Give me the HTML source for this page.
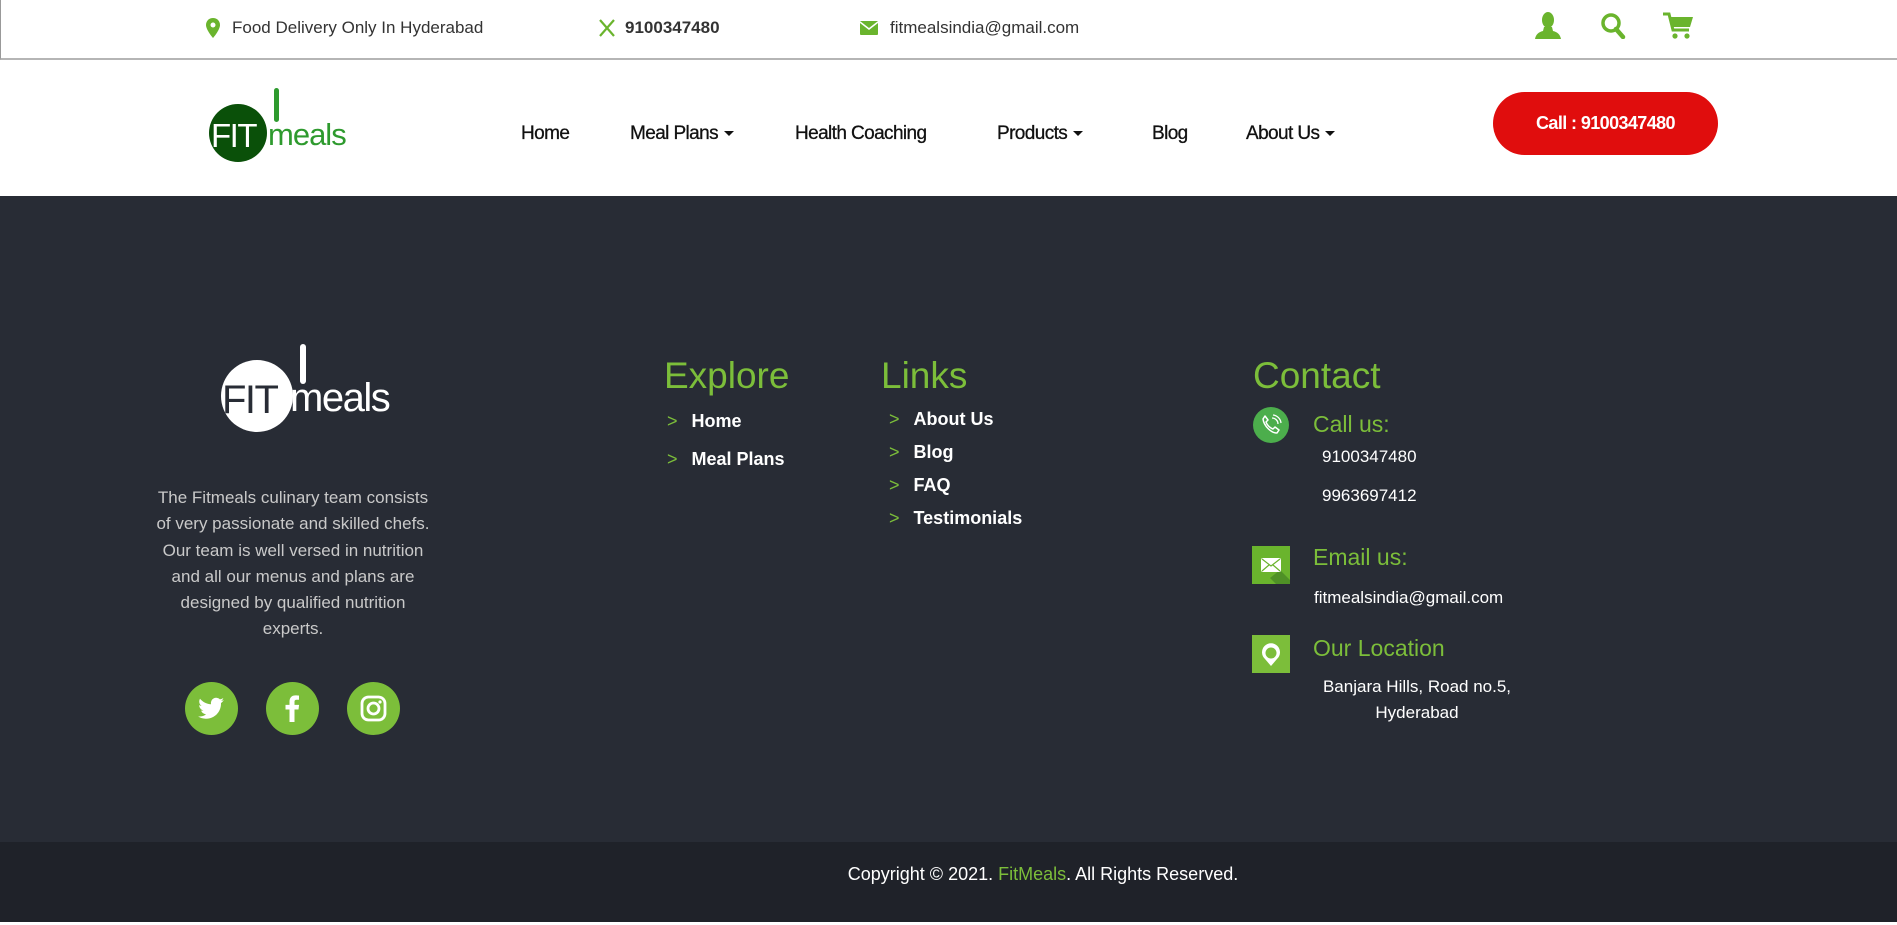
<!DOCTYPE html>
<html><head><meta charset="utf-8"><style>
*{margin:0;padding:0;box-sizing:border-box}
body{width:1897px;height:925px;position:relative;overflow:hidden;background:#fff;font-family:"Liberation Sans",Arial,sans-serif}
.a{position:absolute;white-space:nowrap}
.top{left:0;top:0;width:1897px;height:60px;border-bottom:2px solid #b5b5b5;border-left:1px solid #999}
.tt{font-size:17px;color:#333;top:18px}
.nav{font-size:19px;color:#111;top:123px;letter-spacing:-0.6px;-webkit-text-stroke:0.3px #111}
.car{display:inline-block;width:0;height:0;border-left:5px solid transparent;border-right:5px solid transparent;border-top:5px solid #111;vertical-align:middle;margin-left:6px}
.foot{left:0;top:196px;width:1897px;height:646px;background:#282c35}
.bot{left:0;top:842px;width:1897px;height:80px;background:#1f2229}
.g{color:#7cbe3a}
.h{font-size:37px;color:#7cbe3a}
.li{font-size:18px;color:#fff;font-weight:bold}
.li b{color:#7cbe3a;font-weight:normal;margin-right:14px}
.sub{font-size:23px;color:#7cbe3a}
.w{font-size:17px;color:#fff}
.soc{width:53px;height:53px;border-radius:50%;background:#7cbe3a;top:682px}
</style></head><body>
<div class="a top"></div>
<svg class="a" style="left:206px;top:18px" width="14" height="20" viewBox="0 0 14 20"><path d="M7 0C3 0 0 3 0 7c0 5 7 13 7 13s7-8 7-13c0-4-3-7-7-7z" fill="#6ab42d"/><circle cx="7" cy="7" r="2.5" fill="#fff"/></svg>
<div class="a tt" style="left:232px">Food Delivery Only In Hyderabad</div>
<svg class="a" style="left:599px;top:19px" width="16" height="18" viewBox="0 0 16 18"><path d="M1 1L15 17M15 1L1 17" stroke="#6ab42d" stroke-width="2.2"/></svg>
<div class="a tt" style="left:625px;font-weight:bold">9100347480</div>
<svg class="a" style="left:860px;top:21px" width="18" height="14" viewBox="0 0 18 14"><rect width="18" height="14" rx="1" fill="#6ab42d"/><path d="M0 1L9 8L18 1" stroke="#fff" stroke-width="1.5" fill="none"/></svg>
<div class="a tt" style="left:890px">fitmealsindia@gmail.com</div>
<svg class="a" style="left:1535px;top:12px" width="26" height="27" viewBox="0 0 26 27"><ellipse cx="13" cy="8" rx="6" ry="8" fill="#6ab42d"/><path d="M9 15h8l1 4c4 1 7 3 8 8H0c1-5 4-7 8-8z" fill="#6ab42d"/></svg>
<svg class="a" style="left:1600px;top:12px" width="26" height="27" viewBox="0 0 26 27"><circle cx="11" cy="11" r="8" stroke="#6ab42d" stroke-width="3.5" fill="none"/><path d="M16 17l7 8" stroke="#6ab42d" stroke-width="4.5" stroke-linecap="round"/></svg>
<svg class="a" style="left:1663px;top:12px" width="30" height="27" viewBox="0 0 30 27"><path d="M0 2h6l4 16h16" stroke="#6ab42d" stroke-width="3" fill="none"/><path d="M6 5h24l-3 10H9z" fill="#6ab42d"/><circle cx="12" cy="24" r="2.6" fill="#6ab42d"/><circle cx="24" cy="24" r="2.6" fill="#6ab42d"/></svg>

<div class="a" style="left:209px;top:104px;width:58px;height:58px;border-radius:50%;background:#0a5009"></div>
<div class="a" style="left:211px;top:117px;font-size:33px;color:#fff;letter-spacing:-1.5px">FIT</div>
<div class="a" style="left:274px;top:88px;width:5px;height:34px;border-radius:3px;background:#2e9a2e"></div>
<div class="a" style="left:268px;top:117px;font-size:31px;color:#2e9a2e;letter-spacing:-1px">meals</div>

<div class="a nav" style="left:521px">Home</div>
<div class="a nav" style="left:630px">Meal Plans<span class="car"></span></div>
<div class="a nav" style="left:795px">Health Coaching</div>
<div class="a nav" style="left:997px">Products<span class="car"></span></div>
<div class="a nav" style="left:1152px">Blog</div>
<div class="a nav" style="left:1246px">About Us<span class="car"></span></div>
<div class="a" style="left:1493px;top:92px;width:225px;height:63px;border-radius:32px;background:#e00d0d;color:#fff;font-weight:bold;font-size:18px;letter-spacing:-0.6px;text-align:center;line-height:63px">Call : 9100347480</div>

<div class="a foot"></div>
<div class="a" style="left:221px;top:360px;width:72px;height:72px;border-radius:50%;background:#fff"></div>
<div class="a" style="left:222px;top:378px;font-size:40px;color:#282c35;letter-spacing:-1.5px">FIT</div>
<div class="a" style="left:300px;top:344px;width:6px;height:40px;border-radius:3px;background:#fff"></div>
<div class="a" style="left:290px;top:376px;font-size:40px;color:#fff;letter-spacing:-1.5px">meals</div>
<div class="a" style="left:133px;top:485px;width:320px;font-size:17px;line-height:26.3px;color:#c9c9c9;text-align:center">The Fitmeals culinary team consists<br>of very passionate and skilled chefs.<br>Our team is well versed in nutrition<br>and all our menus and plans are<br>designed by qualified nutrition<br>experts.</div>
<div class="a soc" style="left:185px"><svg width="53" height="53" viewBox="0 0 53 53"><path d="M39 18c-1 .5-2 .8-3 .9 1-.7 2-1.6 2.3-2.8-1 .6-2.2 1-3.3 1.3a5.3 5.3 0 0 0-9 4.8c-4.4-.2-8.300-2.300-11-5.500-1.500 2.500-.7 5.600 1.600 7.100-.9 0-1.700-.3-2.400-.7 0 2.600 1.800 4.800 4.300 5.300-.8.2-1.600.3-2.400.1.700 2.100 2.700 3.600 5 3.700A10.700 10.700 0 0 1 13 34.400a15 15 0 0 0 23-13.300c1.100-.8 2-1.700 2.700-2.800z" fill="#fff"/></svg></div>
<div class="a soc" style="left:266px"><svg width="53" height="53" viewBox="0 0 53 53"><path d="M28.5 40V27.5h4l.6-4.6h-4.6v-3c0-1.300.4-2.200 2.300-2.200H33v-4.100c-.4 0-1.900-.2-3.600-.2-3.500 0-5.900 2.200-5.900 6.100v3.400h-4v4.600h4V40z" fill="#fff"/></svg></div>
<div class="a soc" style="left:347px"><svg width="53" height="53" viewBox="0 0 53 53"><rect x="15" y="15" width="23" height="23" rx="6.5" stroke="#fff" stroke-width="2.8" fill="none"/><circle cx="26.5" cy="26.5" r="5.5" stroke="#fff" stroke-width="2.8" fill="none"/><circle cx="33" cy="20" r="1.6" fill="#fff"/></svg></div>

<div class="a h" style="left:664px;top:355px">Explore</div>
<div class="a li" style="left:667px;top:411px"><b>&gt;</b>Home</div>
<div class="a li" style="left:667px;top:449px"><b>&gt;</b>Meal Plans</div>
<div class="a h" style="left:881px;top:355px">Links</div>
<div class="a li" style="left:889px;top:409px"><b>&gt;</b>About Us</div>
<div class="a li" style="left:889px;top:442px"><b>&gt;</b>Blog</div>
<div class="a li" style="left:889px;top:475px"><b>&gt;</b>FAQ</div>
<div class="a li" style="left:889px;top:508px"><b>&gt;</b>Testimonials</div>

<div class="a h" style="left:1253px;top:355px">Contact</div>
<div class="a" style="left:1253px;top:407px;width:36px;height:36px;border-radius:50%;background:#4cae4c"><svg width="36" height="36" viewBox="0 0 36 36"><path d="M12 9l3 4-2 2c1 3 4 6 7 7l2-2 4 3-2 3c-6 0-13-7-14-14z" stroke="#fff" stroke-width="1.5" fill="none" stroke-linejoin="round"/><path d="M19 11a6 6 0 0 1 6 6M20 8a9 9 0 0 1 8 8" stroke="#fff" stroke-width="1.3" fill="none"/></svg></div>
<div class="a sub" style="left:1313px;top:411px">Call us:</div>
<div class="a w" style="left:1322px;top:447px">9100347480</div>
<div class="a w" style="left:1322px;top:486px">9963697412</div>
<div class="a" style="left:1252px;top:546px;width:38px;height:38px;background:#6ab42d"><svg width="38" height="38" viewBox="0 0 38 38"><path d="M28 24L38 34V38H24L18 32z" fill="#4f9126"/><rect x="9" y="12" width="20" height="14" rx="2" fill="#fff"/><path d="M10 13l9 7 9-7M10 25l7-6M28 25l-7-6" stroke="#6ab42d" stroke-width="1.2" fill="none"/></svg></div>
<div class="a sub" style="left:1313px;top:544px">Email us:</div>
<div class="a w" style="left:1314px;top:588px">fitmealsindia@gmail.com</div>
<div class="a" style="left:1252px;top:635px;width:38px;height:38px;background:#7cbe3a"><svg width="38" height="38" viewBox="0 0 38 38"><path d="M19 31l-6-7a9 9 0 1 1 12 0z" fill="#fff"/><circle cx="19" cy="18" r="5.5" fill="#7cbe3a"/></svg></div>
<div class="a sub" style="left:1313px;top:635px">Our Location</div>
<div class="a w" style="left:1312px;top:674px;width:210px;text-align:center;white-space:normal;line-height:26px">Banjara Hills, Road no.5, Hyderabad</div>

<div class="a bot"></div>
<div class="a" style="left:0;top:864px;width:2086px;text-align:center;font-size:18px;color:#fff">Copyright © 2021. <span class="g">FitMeals</span>. All Rights Reserved.</div>
</body></html>
